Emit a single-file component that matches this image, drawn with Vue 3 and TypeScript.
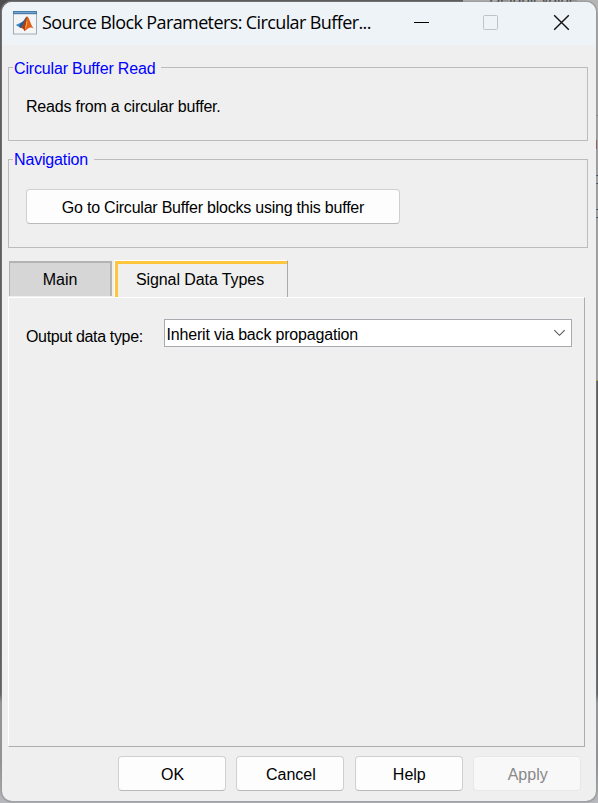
<script setup lang="ts">
import { ref } from 'vue'

interface DialogButton {
  label: string
  disabled?: boolean
}

const tabs: string[] = ['Main', 'Signal Data Types']
const activeTab = ref(1)
const buttons: DialogButton[] = [
  { label: 'OK' },
  { label: 'Cancel' },
  { label: 'Help' },
  { label: 'Apply', disabled: true },
]
</script>

<template>
  <div class="desktop">
    <div class="behind-top"><span>Default value</span></div>
    <div class="behind-right"></div>
    <main class="window">
      <header class="titlebar">
        <svg class="logo" width="24" height="24" viewBox="0 0 24 24">
          <rect x="0.5" y="0.5" width="23" height="22.5" fill="#f3f5f7" stroke="#a3abb2" />
          <rect x="0" y="0" width="24" height="3.2" fill="#4c7ba7" />
          <rect x="1" y="1" width="22" height="1" fill="#6fa6d2" />
          <path d="M2.8 14 L8.2 11.4 L11 13.8 L7.6 17 Z" fill="#3d86c4" />
          <path d="M8.2 11.4 C11 10.8 12 6.3 14 5.6 L12.2 12.5 L9.5 15.2 L7.4 16.9 L6 15 Z" fill="#275f92" />
          <path d="M14 5.6 C16 5.2 17.4 13.4 20.6 17.6 C17.2 15.4 15.6 16.9 11.6 20.2 C10.8 17.9 9.7 16.8 7.8 17 C11 14.8 12.3 7.3 14 5.6Z" fill="#e0601b" />
          <path d="M14 5.6 C13.9 10 13.3 16 11.6 20.2 C10.8 17.9 9.7 16.8 7.8 17 C11 14.8 12.3 7.3 14 5.6Z" fill="#b43a1a" />
          <path d="M14 8 C14.8 11.7 14.2 15.6 11.8 19 C12.4 15.5 13.2 11.4 14 8Z" fill="#f9b72f" />
        </svg>
        <h1>Source Block Parameters: Circular Buffer...</h1>
        <svg class="controls" width="160" height="18" viewBox="0 0 160 18" fill="none">
          <path d="M2 9.5H17" stroke="#000" />
          <rect x="71.5" y="2.5" width="14" height="14" rx="1" stroke="#bfc3c7" />
          <path d="M142.2 2.2L156.8 16.8M156.8 2.2L142.2 16.8" stroke="#111" stroke-width="1.4" />
        </svg>
      </header>

      <fieldset class="group about">
        <legend><span>Circular Buffer Read</span></legend>
        <p>Reads from a circular buffer.</p>
      </fieldset>

      <fieldset class="group navigation">
        <legend><span>Navigation</span></legend>
        <button class="button goto" type="button">Go to Circular Buffer blocks using this buffer</button>
      </fieldset>

      <nav class="tabs">
        <button
          v-for="(tab, i) in tabs"
          :key="tab"
          type="button"
          class="tab"
          :class="{ active: i === activeTab }"
          @click="activeTab = i"
        ><span>{{ tab }}</span></button>
      </nav>

      <section class="panel">
        <label>Output data type:</label>
        <div class="combo">
          <span>Inherit via back propagation</span>
          <svg width="13" height="8" viewBox="0 0 13 8" fill="none">
            <path d="M1.3 1.2L6.5 6.3L11.7 1.2" stroke="#555" stroke-width="1.1" />
          </svg>
        </div>
      </section>

      <footer class="actions">
        <button v-for="b in buttons" :key="b.label" class="button" type="button" :disabled="b.disabled">{{ b.label }}</button>
      </footer>
    </main>
  </div>
</template>

<style>
body { margin: 0; overflow: hidden; }
</style>

<style scoped>
* { box-sizing: border-box; }
.desktop {
  position: relative;
  width: 598px;
  height: 803px;
  padding: 2px;
  overflow: hidden;
  background: linear-gradient(#4e4e4e 0 640px, #555658 694px, #85878f 700px, #9b9b9e 703px, #97979a 762px, #b8b9be 803px);
  font: 16px/18px "Liberation Sans", Arial, sans-serif;
  color: #000;
}
.behind-top {
  position: absolute;
  left: 463px;
  top: 0;
  width: 135px;
  height: 45px;
  background: #b5b5b5;
  overflow: hidden;
}
.behind-top span {
  position: absolute;
  left: 26px;
  top: -10px;
  color: #303030;
  letter-spacing: -0.4px;
  white-space: nowrap;
}
.behind-right {
  position: absolute;
  right: 0;
  top: 12px;
  width: 2px;
  height: 369px;
  background:
    linear-gradient(#888, #888) 0 103px / 2px 1px no-repeat,
    linear-gradient(#80343f, #80343f) 0 128px / 1px 9px no-repeat,
    linear-gradient(#29414e, #29414e) 0 163px / 2px 1px no-repeat,
    linear-gradient(#29414e, #29414e) 0 171px / 2px 1px no-repeat,
    linear-gradient(#29414e, #29414e) 0 197px / 2px 1px no-repeat,
    linear-gradient(#29414e, #29414e) 0 205px / 2px 1px no-repeat,
    #acacac;
  border-bottom: 1px solid #a8a800;
}
.window {
  position: relative;
  display: flex;
  flex-direction: column;
  width: 594px;
  height: 799px;
  overflow: hidden;
  border-radius: 10px;
  background: #efefef;
  box-shadow: 0 0 0 1.5px #8d8d8f88;
}
.titlebar {
  display: flex;
  flex: none;
  align-items: center;
  height: 43px;
  padding: 0 12px 0 11px;
  background: #eef3f8;
}
.logo { flex: none; margin-top: -2px; }
h1 {
  margin: -4px 0 0 5px;
  font: 400 18px/26px "Open Sans", "Noto Sans", sans-serif;
  letter-spacing: -0.61px;
  white-space: nowrap;
}
.controls { flex: none; margin: -4px 12px 0 auto; }
.group {
  position: relative;
  flex: none;
  margin: 0 8px 0 6px;
  padding: 0;
  border: 1px solid #bcbcbc;
  min-width: 0;
}
legend {
  float: left;
  width: auto;
  height: 18px;
  margin: -9px 0 0 4px;
  padding: 0 6px 0 1px;
  background: #efefef;
  color: #0000ff;
  letter-spacing: -0.16px;
  white-space: nowrap;
}
legend span { display: block; }
.about legend { padding-top: 1px; }
.about { height: 74px; margin-top: 22px; }
.navigation { height: 89px; margin-top: 18px; }
.group p { clear: both; margin: 0; padding: 21px 0 0 17px; letter-spacing: -0.21px; }
.button {
  height: 35px;
  padding: 2px 0 0;
  border: 1px solid #d0d0d0;
  border-bottom-color: #bababa;
  border-radius: 4px;
  background: #fdfdfd;
  color: #000;
  font: inherit;
}
.goto {
  display: block;
  clear: both;
  width: 374px;
  margin: 0 0 0 17px;
  transform: translateY(20px);
  letter-spacing: -0.22px;
}
.tabs {
  display: flex;
  flex: none;
  gap: 2px;
  height: 37px;
  margin: 12px 0 0 6px;
}
.tab {
  width: 103px;
  height: 35px;
  margin: 1px 0 0 1px;
  padding: 0;
  border: 1px solid #b3b3b3;
  border-width: 2px 2px 0 1px;
  background: #d6d6d6;
  color: #000;
  font: inherit;
}
.tab.active {
  width: 174px;
  height: 37px;
  margin: 0;
  padding: 1px 2px 0 0;
  border: 0;
  border-top: 1px solid #fff;
  border-left: 1px solid #fff;
  border-right: 1px solid #aaa;
  box-shadow: inset 3px 3px #ffc53d;
  background: #efefef;
  letter-spacing: -0.08px;
}
.panel {
  display: flex;
  flex: none;
  align-items: flex-start;
  width: 577px;
  height: 450px;
  margin-left: 6px;
  padding: 21px 12px 0 17px;
  border: 1px solid #fff;
  border-right-color: #adadad;
  border-bottom-color: #adadad;
}
label { width: 138px; padding-top: 9px; letter-spacing: -0.35px; white-space: nowrap; }
.combo {
  display: flex;
  align-items: center;
  justify-content: space-between;
  width: 408px;
  height: 28px;
  padding: 3px 5px 0 1.5px;
  border: 1px solid #a9a9b0;
  background: #fff;
  letter-spacing: -0.18px;
}
.combo svg { margin-top: -3px; }
.actions {
  display: flex;
  flex: none;
  gap: 10.4px;
  margin: 9px 0 0 116px;
}
.actions .button { width: 108px; padding-left: 1px; }
.button:disabled { color: #888; border-color: #e7e7e7; background: #f8f8f8; }
</style>
